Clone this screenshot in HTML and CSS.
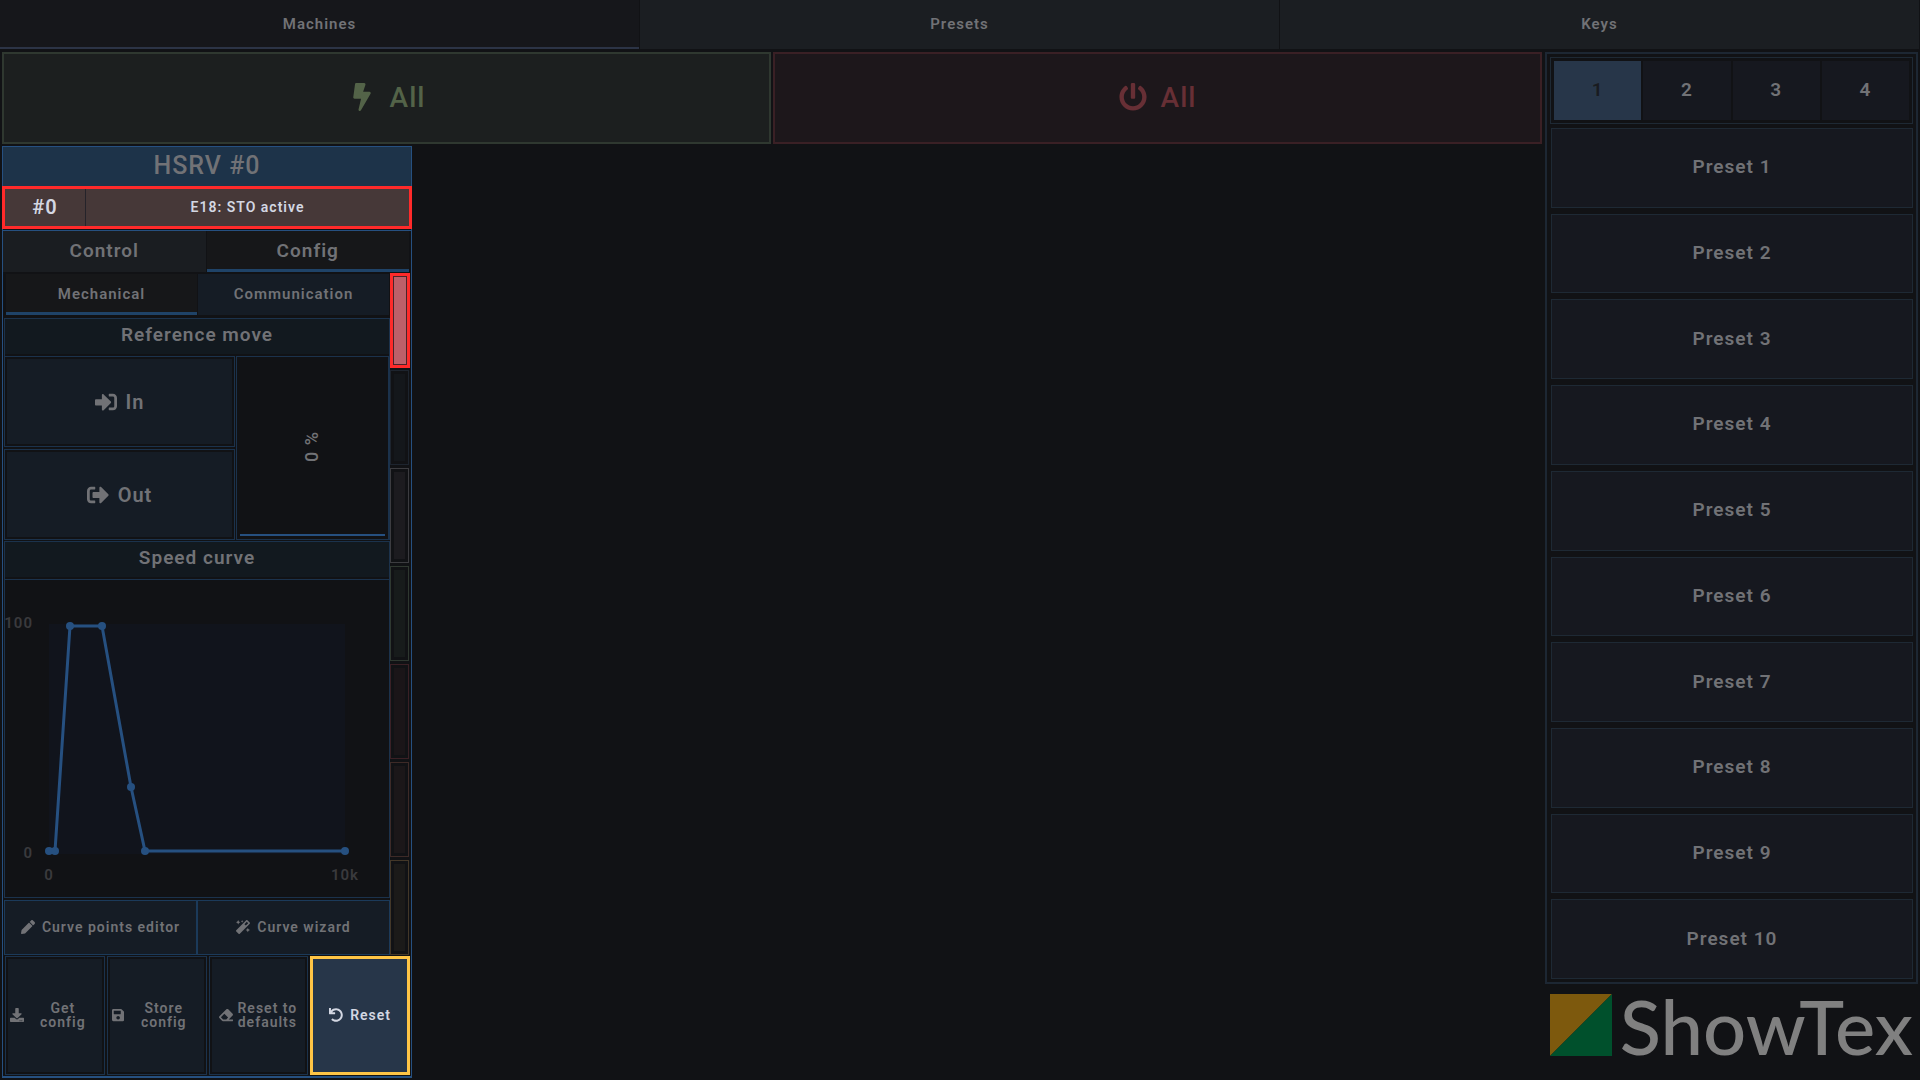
FILE: index.html
```html
<!DOCTYPE html>
<html lang="en">

<head>
    <meta charset="UTF-8">
    <meta name="viewport" content="width=device-width, initial-scale=1.0">
    <title>ShowTex Machines</title>
    <link rel="stylesheet" href="styles.css">
</head>

<body>

    <nav class="main-tabs">
        <button class="active">Machines</button>
        <button>Presets</button>
        <button>Keys</button>
    </nav>

    <div class="layout">
        <main class="machines">
            <div class="all-row">
                <button class="all-btn all-on">
                    <svg viewBox="0 0 320 512"><path d="M296 160H180.600l42.600-129.800C227.200 15 215.700 0 200 0H56C44 0 33.800 8.900 32.200 20.800l-32 240C-1.700 275.200 9.500 288 24 288h118.700L96.600 482.500c-3.600 15.200 8 29.500 23.300 29.500 8.400 0 16.400-4.400 20.800-12l176-304c9.300-15.900-2.200-36-20.700-36z"/></svg>
                    All
                </button>
                <button class="all-btn all-off">
                    <svg viewBox="0 0 512 512"><path d="M400 54.100c63 45 104 118.600 104 201.900 0 136.800-110.800 247.700-247.500 248C120 504.300 8.200 393 8 256.400 7.900 173.100 48.900 99.300 111.800 54.200c11.700-8.300 28-4.800 35 7.700L162.600 90c5.900 10.500 3.100 23.800-6.600 31-41.500 30.800-68 79.600-68 134.900-.1 92.300 74.500 168.100 168 168.100 91.600 0 168.600-74.200 168-169.100-.3-51.800-24.700-101.800-68.100-134-9.700-7.200-12.400-20.500-6.500-30.900l15.800-28.100c7-12.400 23.200-16.100 34.800-7.800zM296 264V24c0-13.300-10.700-24-24-24h-32c-13.300 0-24 10.700-24 24v240c0 13.300 10.700 24 24 24h32c13.300 0 24-10.700 24-24z"/></svg>
                    All
                </button>
            </div>

            <section class="machine">
                <h2>HSRV #0</h2>
                <div class="status">
                    <span class="status-id">#0</span>
                    <span class="status-text">E18: STO active</span>
                </div>

                <div class="machine-tabs">
                    <button>Control</button>
                    <button class="active">Config</button>
                </div>

                <div class="config">
                    <div class="config-main">
                        <div class="sub-tabs">
                            <button class="active">Mechanical</button>
                            <button>Communication</button>
                        </div>

                        <h3>Reference move</h3>
                        <div class="reference">
                            <div class="frame"><button class="move-btn">
                                <svg viewBox="0 0 512 512"><path d="M416 448h-84c-6.600 0-12-5.400-12-12v-40c0-6.600 5.400-12 12-12h84c17.700 0 32-14.300 32-32V160c0-17.700-14.300-32-32-32h-84c-6.600 0-12-5.400-12-12V76c0-6.600 5.400-12 12-12h84c53 0 96 43 96 96v192c0 53-43 96-96 96zm-47-201L201 79c-15-15-41-4.500-41 17v96H24c-13.300 0-24 10.700-24 24v96c0 13.300 10.700 24 24 24h136v96c0 21.500 26 32 41 17l168-168c9.300-9.400 9.300-24.600 0-34z"/></svg>
                                In
                            </button></div>
                            <div class="speed"><span>0 %</span></div>
                            <div class="frame"><button class="move-btn">
                                <svg viewBox="0 0 512 512"><path d="M497 273L329 441c-15 15-41 4.500-41-17v-96H152c-13.300 0-24-10.700-24-24v-96c0-13.300 10.700-24 24-24h136V88c0-21.400 25.900-32 41-17l168 168c9.300 9.400 9.300 24.600 0 34zM192 436v-40c0-6.600-5.400-12-12-12H96c-17.700 0-32-14.300-32-32V160c0-17.700 14.300-32 32-32h84c6.600 0 12-5.400 12-12V76c0-6.600-5.400-12-12-12H96c-53 0-96 43-96 96v192c0 53 43 96 96 96h84c6.600 0 12-5.400 12-12z"/></svg>
                                Out
                            </button></div>
                        </div>

                        <h3>Speed curve</h3>
                        <div class="chart">
                            <svg viewBox="0 0 384 314">
                                <rect class="plot" x="44" y="44" width="296" height="230"/>
                                <polyline points="44,271 50,271 65,46 97,46 126,207 140,271 340,271"/>
                                <circle cx="44" cy="271" r="4"/>
                                <circle cx="50" cy="271" r="4"/>
                                <circle cx="65" cy="46" r="4"/>
                                <circle cx="97" cy="46" r="4"/>
                                <circle cx="126" cy="207" r="4"/>
                                <circle cx="140" cy="271" r="4"/>
                                <circle cx="340" cy="271" r="4"/>
                                <text x="28" y="48" text-anchor="end">100</text>
                                <text x="28" y="278" text-anchor="end">0</text>
                                <text x="44" y="300" text-anchor="middle">0</text>
                                <text x="340" y="300" text-anchor="middle">10k</text>
                            </svg>
                        </div>

                        <div class="curve-actions">
                            <button>
                                <svg viewBox="0 0 512 512"><path d="M497.900 142.100l-46.100 46.100c-4.700 4.700-12.300 4.700-17 0l-111-111c-4.700-4.700-4.700-12.300 0-17l46.100-46.100c18.700-18.700 49.100-18.700 67.900 0l60.100 60.100c18.800 18.700 18.800 49.100 0 67.900zM284.200 99.800L21.600 362.400.4 483.900c-2.900 16.400 11.400 30.600 27.800 27.800l121.500-21.300 262.600-262.600c4.700-4.700 4.700-12.300 0-17l-111-111c-4.800-4.700-12.400-4.700-17.100 0z"/></svg>
                                Curve points editor
                            </button>
                            <button>
                                <svg viewBox="0 0 512 512"><path d="M224 96l16-32 32-16-32-16-16-32-16 32-32 16 32 16 16 32zM80 160l26.660-53.330L160 80l-53.340-26.670L80 0 53.340 53.330 0 80l53.340 26.670L80 160zm352 128l-26.660 53.330L352 368l53.340 26.670L432 448l26.660-53.330L512 368l-53.340-26.670L432 288zm70.620-193.770L417.770 9.380C411.530 3.120 403.340 0 395.150 0c-8.190 0-16.380 3.120-22.630 9.380L9.380 372.520c-12.500 12.500-12.500 32.760 0 45.250l84.850 84.850c6.250 6.250 14.440 9.370 22.620 9.370 8.190 0 16.380-3.120 22.630-9.370l363.140-363.150c12.500-12.480 12.500-32.750 0-45.240zM359.450 203.460l-50.910-50.910 86.600-86.600 50.910 50.910-86.600 86.600z"/></svg>
                                Curve wizard
                            </button>
                        </div>
                    </div>

                    <div class="leds">
                        <i class="led fault"></i>
                        <i class="led blue"></i>
                        <i class="led white"></i>
                        <i class="led green"></i>
                        <i class="led red"></i>
                        <i class="led orange"></i>
                        <i class="led yellow"></i>
                    </div>
                </div>

                <div class="footer">
                    <div class="frame"><button>
                        <svg viewBox="0 0 512 512"><path d="M216 0h80c13.300 0 24 10.700 24 24v168h87.700c17.800 0 26.700 21.500 14.100 34.100L269.700 378.300c-7.500 7.500-19.800 7.500-27.300 0L90.100 226.100c-12.600-12.600-3.700-34.100 14.100-34.100H192V24c0-13.300 10.700-24 24-24zm296 376v112c0 13.300-10.700 24-24 24H24c-13.300 0-24-10.700-24-24V376c0-13.300 10.700-24 24-24h146.700l49 49c20.100 20.100 52.500 20.100 72.600 0l49-49H488c13.300 0 24 10.700 24 24zm-124 88c0-11-9-20-20-20s-20 9-20 20 9 20 20 20 20-9 20-20zm64 0c0-11-9-20-20-20s-20 9-20 20 9 20 20 20 20-9 20-20z"/></svg>
                        <span>Get<br>config</span>
                    </button></div>
                    <div class="frame"><button>
                        <svg viewBox="0 0 448 512"><path d="M433.941 129.941l-83.882-83.882A48 48 0 0 0 316.118 32H48C21.490 32 0 53.490 0 80v352c0 26.510 21.490 48 48 48h352c26.510 0 48-21.490 48-48V163.882a48 48 0 0 0-14.059-33.941zM224 416c-35.346 0-64-28.654-64-64 0-35.346 28.654-64 64-64s64 28.654 64 64c0 35.346-28.654 64-64 64zm96-304.520V212c0 6.627-5.373 12-12 12H76c-6.627 0-12-5.373-12-12V108c0-6.627 5.373-12 12-12h228.520c3.183 0 6.235 1.264 8.485 3.515l3.480 3.480A11.996 11.996 0 0 1 320 111.480z"/></svg>
                        <span>Store<br>config</span>
                    </button></div>
                    <div class="frame"><button class="tight">
                        <svg viewBox="0 0 512 512"><path d="M497.941 273.941c18.745-18.745 18.745-49.137 0-67.882l-160-160c-18.745-18.745-49.136-18.746-67.883 0l-256 256c-18.745 18.745-18.745 49.137 0 67.882l96 96A48.004 48.004 0 0 0 144 480h356c6.627 0 12-5.373 12-12v-40c0-6.627-5.373-12-12-12H355.883l142.058-142.059zm-302.627-62.627l137.373 137.373L265.373 416H150.628l-80-80 124.686-124.686z"/></svg>
                        <span>Reset to<br>defaults</span>
                    </button></div>
                    <div class="frame highlight"><button class="tight">
                        <svg viewBox="0 0 512 512"><path d="M212.333 224.333H12c-6.627 0-12-5.373-12-12V12C0 5.373 5.373 0 12 0h48c6.627 0 12 5.373 12 12v78.112C117.773 39.279 184.260 7.470 258.175 8.007c136.906.994 246.448 111.623 246.157 248.532C504.041 393.258 393.120 504 256.333 504c-64.089 0-122.496-24.313-166.510-64.215-5.099-4.622-5.334-12.554-.467-17.420l33.967-33.967c4.474-4.474 11.662-4.717 16.401-.525C170.760 415.336 211.580 432 256.333 432c97.268 0 176-78.716 176-176 0-97.267-78.716-176-176-176-58.496 0-110.280 28.476-142.274 72.333h98.274c6.627 0 12 5.373 12 12v48c0 6.627-5.373 12-12 12z"/></svg>
                        <span>Reset</span>
                    </button></div>
                </div>
            </section>
        </main>

        <aside class="side">
            <div class="presets">
                <div class="pages">
                    <button class="active">1</button>
                    <button>2</button>
                    <button>3</button>
                    <button>4</button>
                </div>
                <button class="preset">Preset 1</button>
                <button class="preset">Preset 2</button>
                <button class="preset">Preset 3</button>
                <button class="preset">Preset 4</button>
                <button class="preset">Preset 5</button>
                <button class="preset">Preset 6</button>
                <button class="preset">Preset 7</button>
                <button class="preset">Preset 8</button>
                <button class="preset">Preset 9</button>
                <button class="preset">Preset 10</button>
            </div>
            <div class="logo">
                <svg viewBox="0 0 62 62">
                    <path fill="#7d590d" d="M0 0h62L0 62z"/>
                    <path fill="#00502c" d="M62 0v62H0z"/>
                </svg>
                <span>ShowTex</span>
            </div>
        </aside>
    </div>

</body>

</html>
```
FILE: styles.css
```css
* {
    box-sizing: border-box;
}

body {
    display: flex;
    flex-direction: column;
    min-height: 100vh;
    margin: 0;
    background-color: #111215;
    color: #717276;
    font-family: Roboto, sans-serif;
    font-size: 14px;
    font-weight: 600;
    letter-spacing: 1px;
}

h2,
h3 {
    margin: 0;
    font-weight: 600;
    text-align: center;
}

button {
    display: flex;
    align-items: center;
    justify-content: center;
    margin: 0;
    padding: 0 0 2px;
    border: none;
    background: none;
    color: inherit;
    font: inherit;
    letter-spacing: inherit;
    cursor: pointer;
}

svg {
    fill: currentColor;
}

/* top navigation */
.main-tabs {
    display: flex;
    gap: 1px;
    height: 49px;
    padding-right: 1px;
}

.main-tabs button {
    flex: 1;
    padding: 0;
    background-color: #1b1e22;
    font-size: 15px;
    border-bottom: 2px solid #1b1e22;
}

.main-tabs .active {
    background-color: #16171b;
    border-bottom-color: #2c3446;
}

.layout {
    display: grid;
    grid-template-columns: 1fr 373px;
    gap: 3px;
    flex: 1;
    padding: 3px 2px 2px;
}

.machines {
    display: flex;
    flex-direction: column;
    gap: 2px;
}

.all-row {
    display: flex;
    gap: 2px;
}

.all-btn {
    flex: 1;
    gap: 14px;
    height: 92px;
    border: 2px solid;
    font-size: 28px;
    font-weight: 500;
}

.all-btn svg {
    width: 28px;
    height: 28px;
}

.all-on {
    background-color: #1c1f1f;
    border-color: #2f3830;
    color: #536348;
}

.all-off {
    background-color: #1d171b;
    border-color: #3a2025;
    color: #672f35;
}

/* machine panel */
.machine {
    display: flex;
    flex-direction: column;
    flex: 1;
    width: 410px;
    border: 1px solid #265080;
    border-bottom-width: 2px;
}

.machine h2 {
    height: 39px;
    background-color: #1d3349;
    font-size: 25px;
    font-weight: 500;
    line-height: 38px;
}

.status {
    display: flex;
    height: 43px;
    margin: 0 -1px 1px;
    border: 3px solid #ff2a2a;
    background-color: #463838;
    color: #d3d7e2;
    line-height: 36px;
    text-align: center;
}

.status-id {
    width: 81px;
    border-right: 1px solid #25232a;
    font-size: 20px;
}

.status-text {
    flex: 1;
}

.machine-tabs {
    display: flex;
    gap: 1px;
    height: 42px;
    padding-right: 2px;
    border-top: 1px solid #265080;
    font-size: 19px;
}

.machine-tabs button {
    flex: 1;
    background-color: #1a1d21;
}

.machine-tabs .active,
.sub-tabs .active {
    background-color: #161719;
    box-shadow: inset 0 -3px #1f4368;
}

.config {
    display: flex;
    flex: 1;
    margin: 1px 1px;
}

.config-main {
    display: flex;
    flex-direction: column;
    flex: 1;
}

.sub-tabs {
    display: flex;
    gap: 1px;
    height: 41px;
    margin: 1px 1px 3px 2px;
    font-size: 15px;
}

.sub-tabs button {
    flex: 1;
    background-color: #151c25;
}

.config h3 {
    height: 38px;
    border: 1px solid #1b324c;
    border-bottom: none;
    background-color: #12191f;
    font-size: 19px;
    line-height: 32px;
    box-shadow: inset 0 -2px #111215;
}

.reference {
    display: grid;
    grid-template-columns: 3fr 2fr;
    grid-template-rows: 91px 91px;
    gap: 2px 1px;
    margin-bottom: 1px;
}

.frame {
    display: flex;
    padding: 2px;
    border: 1px solid #1b324c;
}

.frame button {
    flex: 1;
    background-color: #151c25;
}

.frame .move-btn {
    gap: 9px;
    padding: 0;
    font-size: 20px;
}

.move-btn svg {
    height: 22px;
}

.speed {
    display: flex;
    grid-row: 1 / span 2;
    grid-column: 2;
    padding: 3px;
    border: 1px solid #1b324c;
    border-right-width: 2px;
    font-size: 18px;
    font-weight: 500;
}

/* the value sits on top of the fill line */
.speed span {
    flex: 1;
    border-top: 2px solid #265080;
    line-height: 144px;
    text-align: center;
    writing-mode: vertical-rl;
    transform: rotate(180deg);
}

.chart {
    flex: 1;
    border: 1px solid #1b324c;
    margin-bottom: 2px;
}

.chart svg {
    display: block;
    width: 100%;
}

.chart .plot {
    fill: #11141c;
}

.chart polyline {
    fill: none;
    stroke: #265080;
    stroke-width: 3px;
}

.chart circle {
    fill: #265080;
}

.chart text {
    fill: #3a3a3d;
    font-size: 15px;
}

.curve-actions {
    display: flex;
    height: 55px;
}

.curve-actions button {
    flex: 1;
    gap: 7px;
    border: 1px solid #1b3a5a;
    background-color: #151c25;
    white-space: nowrap;
}

.curve-actions svg,
.footer svg {
    flex: none;
    height: 14px;
}

/* status lights */
.leds {
    display: flex;
    flex-direction: column;
    gap: 3px;
    width: 20px;
}

.led {
    flex: 1;
    width: 19px;
    padding: 3px;
    border: 1px solid;
    background-clip: content-box;
}

.led.fault {
    width: 20px;
    padding: 1px;
    margin-bottom: -1px;
    border: 3px solid #ff2a2a;
    background: #bd5f69;
    box-shadow: inset 0 0 0 1px #4b2328;
}

.led.blue {
    border-color: #1d242e;
    background-color: #14171b;
}

.led.white {
    border-color: #3c3c40;
    background-color: #1c1b1f;
}

.led.green {
    border-color: #2f3830;
    background-color: #171b1b;
}

.led.red {
    border-color: #3a2025;
    background-color: #1a1518;
}

.led.orange {
    border-color: #3d2a27;
    background-color: #1b1719;
}

.led.yellow {
    border-color: #433728;
    background-color: #1b1a19;
}

.footer {
    display: grid;
    grid-template-columns: repeat(4, 1fr);
    gap: 2px;
    height: 119px;
    margin: 0 1px 1px 2px;
    line-height: 14px;
}

.footer button {
    padding: 0 0 2px 2px;
}

.footer span {
    flex: 1;
}

.footer .tight {
    gap: 4px;
    padding-left: 0;
}

.footer .tight span {
    flex: none;
}

.frame.highlight {
    padding: 0;
    border: 3px solid #ffc545;
    color: #d3d7e2;
}

.highlight button {
    background-color: #273649;
}

.highlight .tight {
    gap: 7px;
}

/* presets */
.side {
    display: flex;
    flex-direction: column;
}

.presets {
    display: flex;
    flex-direction: column;
    gap: 6px;
    flex: 1;
    padding: 3px;
    border: 2px solid #1d2733;
    font-size: 19px;
}

.pages {
    display: flex;
    gap: 2px;
    height: 67px;
    padding: 3px;
    margin-bottom: -2px;
    border: 1px solid #1e2934;
}

.pages button {
    flex: 1;
    background-color: #16181f;
}

.pages .active {
    background-color: #273649;
    color: #191b20;
}

.preset {
    flex: 1;
    margin-left: 1px;
    border: 1px solid #1e2934;
    background-color: #16181f;
}

.logo {
    display: flex;
    align-items: center;
    justify-content: space-between;
    height: 94px;
    padding: 0 5px 12px;
    color: #808080;
    font-family: Lato, sans-serif;
    font-size: 76px;
    font-weight: 500;
    letter-spacing: normal;
}

.logo svg {
    width: 62px;
}
```
